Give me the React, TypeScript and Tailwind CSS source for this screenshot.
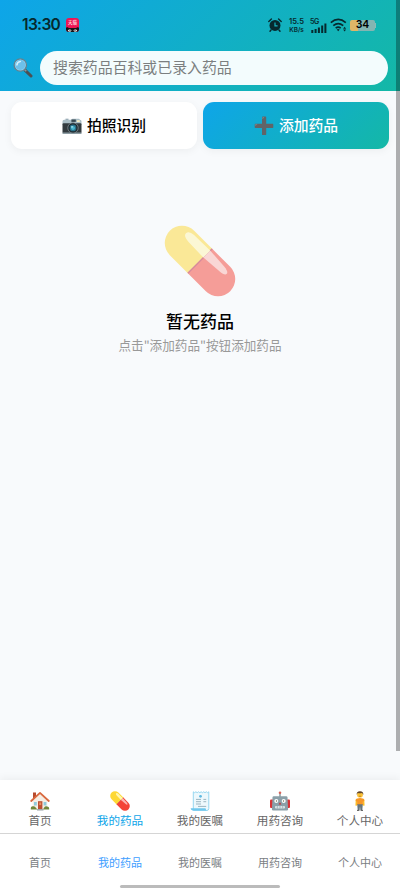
import type { ReactNode } from "react";
import clsx from "clsx";

function SearchIcon() {
  return (
    <svg className="h-5 w-5 shrink-0" viewBox="0 0 20 20">
      <path d="M12 12.2 L18 18" stroke="#4b5054" strokeWidth="3" strokeLinecap="round" />
      <path d="M11.2 11.2 L13.3 13.3" stroke="#8b9499" strokeWidth="1.6" />
      <circle cx="7.3" cy="7" r="6.2" fill="#8ed4f5" stroke="#64808e" strokeWidth="1.3" />
      <circle cx="7.3" cy="7" r="4.9" fill="#6dc0ea" />
      <path d="M3.9 6.9 Q4.2 3.7 7.4 3.4" stroke="#d7f1fd" strokeWidth="1.5" strokeLinecap="round" fill="none" />
    </svg>
  );
}

function CameraIcon() {
  return (
    <svg className="h-5 w-5" viewBox="0 0 20 20">
      <path d="M1.5 3.7h2v-1h3v1z" fill="#78909c" />
      <path d="M.5 5.5q0-1.7 1.6-1.8h7l1.3-1h6.7l.9 1.1q1.5.2 1.5 1.7V8H.5z" fill="#a9bdc5" />
      <rect x="9.4" y="3.5" width="4.4" height="2.4" fill="#37474f" />
      <rect x="15" y="4.3" width="2.8" height="1.6" fill="#fff3c4" />
      <rect x=".5" y="7.2" width="19" height="10" rx="1" fill="#333b3f" />
      <rect x=".5" y="16.5" width="19" height="1.4" rx=".5" fill="#8d9da4" />
      <circle cx="11" cy="11.9" r="5.2" fill="#1f282d" stroke="#829097" strokeWidth=".8" />
      <circle cx="11" cy="11.9" r="3.4" fill="#28728a" />
      <circle cx="11" cy="11.9" r="2" fill="#49b4cd" />
      <circle cx="10" cy="10.9" r=".8" fill="#bdebf3" />
    </svg>
  );
}

function PlusIcon() {
  return (
    <svg className="h-5 w-5" viewBox="0 0 20 20">
      <path d="M8 1.2q0-.7.7-.7h2.8q.7 0 .7.7v6.5h6.4q.7 0 .7.7v2.8q0 .7-.7.7h-6.4v6.5q0 .7-.7.7H8.7q-.7 0-.7-.7v-6.5H1.4q-.7 0-.7-.7V8.4q0-.7.7-.7H8z" fill="#616467" />
      <path d="M8.8 3V1.5h1.3M1.5 9.7V8.6h1.7" stroke="#8d9295" strokeWidth=".6" fill="none" />
    </svg>
  );
}

function PillIcon({ className }: { className: string }) {
  return (
    <svg className={className} viewBox="0 0 72 72">
      <g transform="rotate(45 36 36)">
        <path d="M36 18.8H10.5a17.2 17.2 0 0 0 0 34.4H36z" fill="#fdd835" />
        <path d="M36 18.8h25.5a17.2 17.2 0 0 1 0 34.4H36z" fill="#f44336" />
        <path d="M36 18.8v34.4" stroke="#b71c3c" strokeWidth="1.4" />
        <path d="M6.5 26.3q0-4.1 7-4.4l22.5-.5v9.8l-21.5-.6q-8-.3-8-4.3z" fill="#fff6b0" />
        <path d="M36 21.4l21 1.4q7 .7 7 3.4t-7 3.3l-21 1.7z" fill="#fbb5b0" />
      </g>
    </svg>
  );
}

function HouseIcon() {
  return (
    <svg className="h-5 w-5" viewBox="0 0 20 20">
      <rect x="3" y="1.5" width="3" height="6" fill="#b84a2d" />
      <path d="M2.7 9 10 2.7 17.3 9v9H2.7z" fill="#f6eee4" />
      <path d="M1.2 10 10 1.9l8.8 8.1" stroke="#d9693f" strokeWidth="1.8" fill="none" strokeLinejoin="round" strokeLinecap="round" />
      <rect x="8" y="10.2" width="4.4" height="8" fill="#bd5032" />
      <rect x="9.2" y="11.5" width="2" height="2.6" fill="#e98e61" />
      <path d="M4 11h2.8v3.5H4zM13.6 11h2.8v3.5h-2.8z" fill="#91cbdc" />
      <path d="M.8 18.6q-.3-3.5 2.2-3.3 2.3-.3 3 1.6l1.5 1.7zM13 18.6l1-1.8q1-1.7 3-1.4 2.4-.1 2.2 3.2z" fill="#71873a" />
      <path d="M7 18.1h6.5v1.4H7z" fill="#98a3a6" />
    </svg>
  );
}

function ReceiptIcon() {
  return (
    <svg className="h-5 w-5" viewBox="0 0 20 20">
      <path d="M3.3.8l1.3.9 1.3-.9 1.3.9 1.3-.9 1.3.9 1.3-.9 1.3.9 1.3-.9 1.3.9 1.3-.9 1.3.9 1.2-.9v16.7q0 2-2.2 2H3.3z" fill="#edf8fc" stroke="#8bd2ee" strokeWidth=".9" />
      <path d="M.6 17.3h14.9q0 2.2 2.5 2.2H2.6Q.8 19.3.6 17.3z" fill="#6fc7ed" />
      <circle cx="10.5" cy="5.3" r="1.4" fill="#5eb9e1" />
      <path d="M6 8.4h5M6 10.7h5M6 13h5M13.4 8.4h2.8M13.4 10.7h2.8M8 15.4h8.2" stroke="#9cb6c1" strokeWidth="1" />
    </svg>
  );
}

function RobotIcon() {
  return (
    <svg className="h-5 w-5" viewBox="0 0 20 20">
      <path d="M10 2v4" stroke="#718087" strokeWidth="1.2" />
      <circle cx="10" cy="1.7" r="1.3" fill="#d96258" />
      <rect x="0" y="8.4" width="3.3" height="8.6" rx="1" fill="#d83437" />
      <rect x="16.7" y="8.4" width="3.3" height="8.6" rx="1" fill="#d83437" />
      <path d="M3.7 5.2h12.6q1 0 1.2 1l.6 12q0 1.3-1.3 1.3H3.2q-1.3 0-1.3-1.3l.6-12q.2-1 1.2-1z" fill="#8b9fa8" />
      <circle cx="6.3" cy="10" r="2" fill="#fff" />
      <circle cx="13.7" cy="10" r="2" fill="#fff" />
      <circle cx="6.5" cy="10" r=".7" fill="#786d4b" />
      <circle cx="13.5" cy="10" r=".7" fill="#786d4b" />
      <path d="m10 11.2 1.3 2.4H8.7z" fill="#c52d32" />
      <rect x="5" y="15" width="10" height="2.5" rx="1" fill="#dce5e8" />
      <path d="M7.3 15v2.5M10 15v2.5M12.7 15v2.5" stroke="#84979f" strokeWidth=".6" />
    </svg>
  );
}

function PersonIcon() {
  return (
    <svg className="h-5 w-5" viewBox="0 0 20 20">
      <path d="M6.6 8.5 6.3 14M13.4 8.5l.3 5.5" stroke="#fcbd25" strokeWidth="1.7" strokeLinecap="round" />
      <path d="M7.2 7.4q2.8-1 5.6 0 1.6.5 1.6 2.7l-1.5.4v3.4H7.1v-3.4L5.6 10q0-2.1 1.6-2.6z" fill="#f79727" />
      <path d="M7.2 13.2h5.6l-.5 5.8h-1.9L10 15.3 9.6 19H7.7z" fill="#65757e" />
      <path d="M7 19.4h2.4M10.6 19.4H13" stroke="#444" strokeWidth=".9" />
      <circle cx="10" cy="3.7" r="2.9" fill="#fac034" />
      <path d="M6.7 4Q6.2.2 10 .2T13.3 4q-.4-1.7-1.5-2-2 .5-3.8.1Q6.9 2.7 6.7 4z" fill="#60452b" />
      <path d="M9 5.1q1 .7 2 0" stroke="#875126" strokeWidth=".5" fill="none" />
    </svg>
  );
}

function AlarmIcon() {
  return (
    <svg className="h-[14px] w-[14px]" viewBox="0 0 14 14">
      <circle cx="7" cy="7.4" r="5.5" fill="#06292e" />
      <path d="M.8 3.4 3.4.9M13.2 3.4 10.6.9M3 12l-1 1.3M11 12l1 1.3" stroke="#06292e" strokeWidth="1.4" strokeLinecap="round" />
      <path d="M7 4.5v3.3h2.6" stroke="#18b2bf" strokeWidth="1.2" fill="none" />
    </svg>
  );
}

function StatusBar() {
  return (
    <div className="flex h-[51px] items-start pl-[22px] pr-[24px] pt-[17px] text-[#06292e]">
      <div className="flex h-4 items-center">
        <span className="w-[38px] whitespace-nowrap font-['Inter'] text-[15.5px] font-semibold leading-4 tracking-[-0.65px]">13:30</span>
        <div className="ml-[6px] flex h-[14px] w-[13px] flex-col overflow-hidden rounded-[3px] bg-[#ed1554]">
          <span className="h-[9px] text-center text-[4.5px] leading-[9px] text-white">天猫</span>
          <svg className="h-[5px] w-[13px]" viewBox="0 0 13 5">
            <path d="M0 5V1l1-1 2 1h7l2-1 1 1v4z" fill="#171318" />
            <ellipse cx="3.7" cy="3.6" rx="1.6" ry="1.2" fill="#fff" />
            <ellipse cx="9.3" cy="3.6" rx="1.6" ry="1.2" fill="#fff" />
            <circle cx="4" cy="3.7" r=".6" fill="#171318" />
            <circle cx="9" cy="3.7" r=".6" fill="#171318" />
          </svg>
        </div>
      </div>

      <div className="ml-auto flex h-4 items-center">
        <AlarmIcon />
        <div className="ml-[6px] flex w-[17px] flex-col items-center whitespace-nowrap font-['Inter'] font-semibold">
          <span className="text-[7.6px] leading-[9px]">15.5</span>
          <span className="text-[6.4px] leading-[8px]">KB/s</span>
        </div>
        <div className="ml-[5px] flex w-[17px] flex-col font-['Inter'] text-[7px] font-semibold leading-[7px]">
          <span className="tracking-[-0.3px]">5G</span>
          <svg className="-mt-[2px] h-[10px] w-[17px]" viewBox="0 0 17 10">
            <path d="M2.3 7v3M5.6 6V10M8.9 4.5V10M12.2 2.5V10M15.4 .5V10" stroke="#06292e" strokeWidth="2" />
          </svg>
        </div>
        <svg className="ml-[3px] h-[14px] w-[17px]" viewBox="0 0 17 14">
          <path d="M.8 4.6Q8.2-1.8 15.8 4.6M3.3 7.7Q8.2 3.4 13.2 7.7M5.7 10.2Q8.2 8.1 10.7 10.2" stroke="#06292e" strokeWidth="1.7" fill="none" />
          <path d="m6.7 11.5 1.5 1.8 1.5-1.8q-1.5-1-3 0zM14.6 8.7l1.5 2h-3zM14.6 13.4l1.5-2h-3z" fill="#06292e" />
        </svg>
        <div className="ml-[3px] flex h-[11px] w-[25px] items-center justify-center rounded-[2px] bg-[linear-gradient(90deg,#dfb667_34%,#84b5b2_34%)] font-['Inter'] text-[10.5px] font-semibold leading-3 text-black">
          34
        </div>
        <span className="h-[5px] w-[1px] bg-[#8abbb7]" />
      </div>
    </div>
  );
}

type Tab = { label: string; icon: ReactNode; active?: boolean };

const tabs: Tab[] = [
  { label: "首页", icon: <HouseIcon /> },
  { label: "我的药品", icon: <PillIcon className="h-5 w-5" />, active: true },
  { label: "我的医嘱", icon: <ReceiptIcon /> },
  { label: "用药咨询", icon: <RobotIcon /> },
  { label: "个人中心", icon: <PersonIcon /> },
];

export default function App() {
  return (
    <div className="relative flex h-[889px] w-[400px] flex-col overflow-hidden bg-[#f8fafc] font-['Noto_Sans_CJK_SC',sans-serif]">
      <header className="h-[91px] shrink-0 bg-linear-[135deg,#0ea5e9,#14b8a6]">
        <StatusBar />
        <div className="flex items-center pl-[13px] pr-3">
          <SearchIcon />
          <input
            className="ml-[7px] h-[34px] min-w-0 flex-1 rounded-full bg-[#f3fcfd] px-[13px] pb-[3px] text-[14.9px] text-gray-700 outline-none placeholder:text-[#7b7f80]"
            placeholder="搜索药品百科或已录入药品"
          />
        </div>
      </header>

      <main className="flex-1 px-[11px] pt-[11px]">
        <div className="grid grid-cols-2 gap-[6px]">
          <button className="flex h-[47px] items-center justify-center gap-[5px] rounded-[11px] bg-white text-[14.8px] font-medium text-black shadow-[0_2px_8px_rgba(0,0,0,0.05)]">
            <CameraIcon />
            拍照识别
          </button>
          <button className="flex h-[47px] items-center justify-center gap-[5px] rounded-[11px] bg-linear-[135deg,#0ea5e9,#14b8a6] text-[14.8px] font-medium text-white shadow-[0_2px_8px_rgba(0,0,0,0.05)]">
            <PlusIcon />
            添加药品
          </button>
        </div>

        <div className="flex flex-col items-center pt-[76px]">
          <PillIcon className="h-[72px] w-[72px] opacity-50" />
          <h2 className="mt-[12px] text-[17px] font-medium leading-6 text-black">暂无药品</h2>
          <p className="mt-[3px] text-[12.6px] leading-[18px] text-[#999]">点击"添加药品"按钮添加药品</p>
        </div>
      </main>

      <nav className="grid h-[53px] shrink-0 grid-cols-5 bg-white shadow-[0_-2px_8px_rgba(0,0,0,0.05)]">
        {tabs.map((tab) => (
          <div key={tab.label} className="flex flex-col items-center pt-[11px]">
            {tab.icon}
            <span className={clsx("mt-[1px] text-[11.6px] leading-4", tab.active ? "text-[#0ea5e9]" : "text-[#666]")}>
              {tab.label}
            </span>
          </div>
        ))}
      </nav>

      <div className="flex h-[56px] shrink-0 flex-col items-center border-t border-[#d5d5d5] bg-white">
        <div className="grid w-full grid-cols-5 pt-[20px] text-center text-[11px] leading-4">
          {tabs.map((tab) => (
            <span key={tab.label} className={tab.active ? "text-[#409eff]" : "text-[#7a7e83]"}>
              {tab.label}
            </span>
          ))}
        </div>
        <div className="mb-[1px] mt-auto h-[3px] w-[160px] rounded-full bg-[#bbb]" />
      </div>

      <div className="absolute right-0 top-0 h-[751px] w-[4px] bg-black/30" />
    </div>
  );
}
